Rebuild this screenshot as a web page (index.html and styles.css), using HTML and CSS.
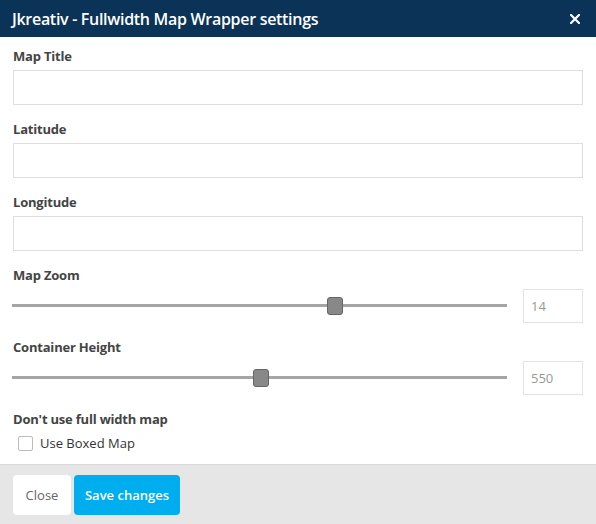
FILE: index.html
```html
<!DOCTYPE html>
<html lang="en">
<head>
    <meta charset="UTF-8">
    <title>Jkreativ - Fullwidth Map Wrapper settings</title>
    <link rel="stylesheet" href="styles.css">
</head>
<body>
    <div class="modal">
        <header class="modal-header">
            <h1>Jkreativ - Fullwidth Map Wrapper settings</h1>
            <button class="close-x" title="Close">
                <svg width="10" height="10" viewBox="0 0 10 10">
                    <path d="M1 1 L9 9 M9 1 L1 9" stroke="#fff" stroke-width="2.2" stroke-linecap="square"/>
                </svg>
            </button>
        </header>

        <main class="modal-body">
            <div class="field">
                <label for="title">Map Title</label>
                <input type="text" id="title">
            </div>
            <div class="field">
                <label for="lat">Latitude</label>
                <input type="text" id="lat">
            </div>
            <div class="field">
                <label for="lng">Longitude</label>
                <input type="text" id="lng">
            </div>
            <div class="field">
                <label>Map Zoom</label>
                <div class="slider-row">
                    <div class="slider">
                        <div class="track"></div>
                        <div class="thumb" style="left: 65.2%"></div>
                    </div>
                    <input type="text" class="num" value="14">
                </div>
            </div>
            <div class="field">
                <label>Container Height</label>
                <div class="slider-row">
                    <div class="slider">
                        <div class="track"></div>
                        <div class="thumb" style="left: 50.4%"></div>
                    </div>
                    <input type="text" class="num" value="550">
                </div>
            </div>
            <div class="field last">
                <label>Don't use full width map</label>
                <div class="check-row">
                    <span class="check"></span>
                    <span>Use Boxed Map</span>
                </div>
            </div>
        </main>

        <footer class="modal-footer">
            <button class="btn btn-close">Close</button>
            <button class="btn btn-save">Save changes</button>
        </footer>
    </div>
</body>
</html>
```

FILE: styles.css
```css
body {
    margin: 0;
    padding: 0;
    font-family: "Open Sans", Arial, sans-serif;
    background-color: #fff;
}
.modal {
    width: 596px;
    height: 524px;
    display: flex;
    flex-direction: column;
}
.modal-header {
    flex: none;
    height: 37px;
    background-color: #0b3357;
    display: flex;
    justify-content: space-between;
    align-items: center;
    padding: 0 16px 0 12px;
}
.modal-header h1 {
    margin: 0;
    color: #fff;
    font-size: 16px;
    font-weight: 600;
    letter-spacing: -0.3px;
}
.close-x {
    border: none;
    background: none;
    padding: 0;
    width: 10px;
    height: 10px;
    display: flex;
}
.modal-body {
    padding: 10px 13px 0 13px;
    flex: 1;
    min-height: 0;
}
.field {
    margin-bottom: 15px;
}
.field.last {
    margin-bottom: 0;
}
.field label {
    display: block;
    font-size: 13px;
    font-weight: 700;
    line-height: 18px;
    color: #444;
    margin-bottom: 5px;
    letter-spacing: -0.2px;
}
.field input[type="text"] {
    display: block;
    width: 100%;
    height: 35px;
    box-sizing: border-box;
    border: 1px solid #dedede;
    margin: 0;
}
.slider-row {
    display: flex;
    align-items: center;
    gap: 16px;
    margin-left: -1px;
}
.slider {
    flex: 1;
    position: relative;
    height: 34px;
}
.track {
    position: absolute;
    left: 0;
    right: 0;
    top: 15px;
    height: 3px;
    background-color: #a5a5a5;
}
.thumb {
    position: absolute;
    top: 8px;
    width: 16px;
    height: 18px;
    margin-left: -8px;
    box-sizing: border-box;
    background-color: #888;
    border: 1px solid #666;
    border-radius: 3px;
}
.field input.num {
    width: 60px;
    height: 34px;
    flex: none;
    border: 1px solid #e3e3e3;
    padding-left: 7px;
    font-family: "Open Sans", Arial, sans-serif;
    font-size: 13px;
    color: #999;
}
.check-row {
    display: flex;
    align-items: center;
    height: 20px;
    margin-top: 1px;
    padding-left: 5px;
    font-size: 13px;
    color: #333;
}
.check {
    width: 15px;
    height: 15px;
    box-sizing: border-box;
    border: 1px solid #bbb;
    border-radius: 2px;
    margin-right: 7px;
}
.modal-footer {
    flex: none;
    height: 59px;
    background-color: #e6e6e6;
    border-top: 1px solid #d9d9d9;
    display: flex;
    align-items: center;
    padding: 0 13px;
    gap: 3px;
}
.btn {
    height: 40px;
    border: none;
    border-radius: 4px;
    font-family: "Open Sans", Arial, sans-serif;
    font-size: 13px;
    cursor: pointer;
}
.btn-close {
    width: 58px;
    background-color: #fff;
    color: #666;
}
.btn-save {
    width: 106px;
    background-color: #00aeef;
    color: #fff;
    font-weight: 600;
}
```
